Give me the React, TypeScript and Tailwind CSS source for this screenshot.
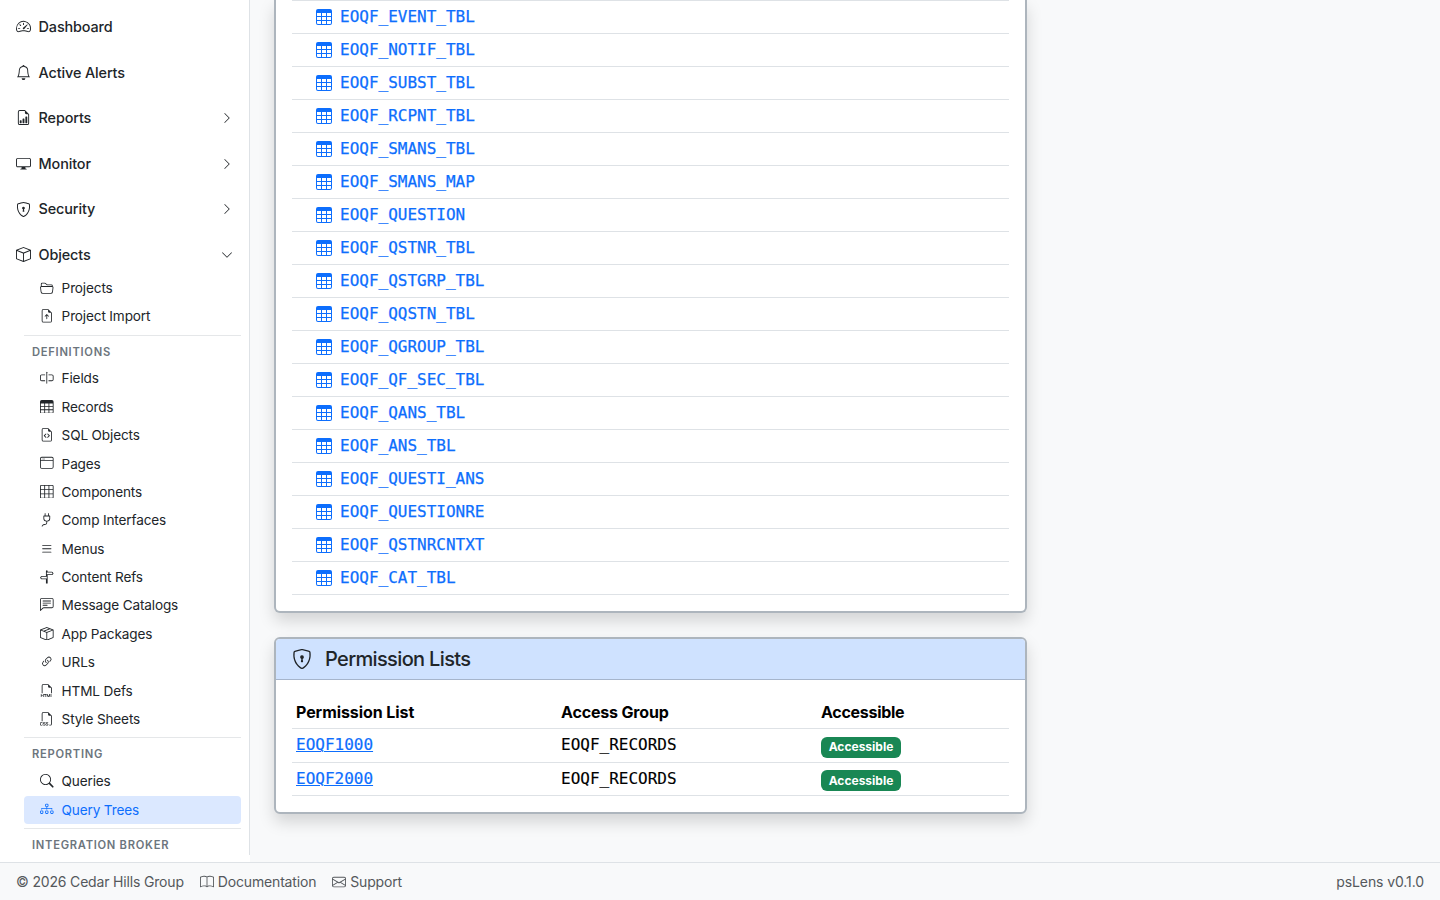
import type { IconType } from "react-icons";
import {
  BsSpeedometer2, BsBell, BsFileEarmarkBarGraph, BsDisplay, BsShieldLock, BsBox, BsChevronRight, BsChevronDown,
  BsFolder2Open, BsFileEarmarkArrowUp, BsInputCursor, BsTable, BsFileEarmarkCode, BsWindow, BsGrid3X3, BsPlug,
  BsList, BsSignpostSplit, BsChatLeftText, BsBoxSeam, BsLink45Deg, BsFiletypeHtml, BsFiletypeCss, BsSearch,
  BsDiagram3, BsBook, BsEnvelope,
} from "react-icons/bs";

type Item = { icon: IconType; label: string; active?: boolean };

const mainItems: (Item & { chevron?: IconType })[] = [
  { icon: BsSpeedometer2, label: "Dashboard" },
  { icon: BsBell, label: "Active Alerts" },
  { icon: BsFileEarmarkBarGraph, label: "Reports", chevron: BsChevronRight },
  { icon: BsDisplay, label: "Monitor", chevron: BsChevronRight },
  { icon: BsShieldLock, label: "Security", chevron: BsChevronRight },
  { icon: BsBox, label: "Objects", chevron: BsChevronDown },
];

const projects: Item[] = [
  { icon: BsFolder2Open, label: "Projects" },
  { icon: BsFileEarmarkArrowUp, label: "Project Import" },
];

const definitions: Item[] = [
  { icon: BsInputCursor, label: "Fields" },
  { icon: BsTable, label: "Records" },
  { icon: BsFileEarmarkCode, label: "SQL Objects" },
  { icon: BsWindow, label: "Pages" },
  { icon: BsGrid3X3, label: "Components" },
  { icon: BsPlug, label: "Comp Interfaces" },
  { icon: BsList, label: "Menus" },
  { icon: BsSignpostSplit, label: "Content Refs" },
  { icon: BsChatLeftText, label: "Message Catalogs" },
  { icon: BsBoxSeam, label: "App Packages" },
  { icon: BsLink45Deg, label: "URLs" },
  { icon: BsFiletypeHtml, label: "HTML Defs" },
  { icon: BsFiletypeCss, label: "Style Sheets" },
];

const reporting: Item[] = [
  { icon: BsSearch, label: "Queries" },
  { icon: BsDiagram3, label: "Query Trees", active: true },
];

const records = [
  "EOQF_EVENT_TBL", "EOQF_NOTIF_TBL", "EOQF_SUBST_TBL", "EOQF_RCPNT_TBL", "EOQF_SMANS_TBL", "EOQF_SMANS_MAP",
  "EOQF_QUESTION", "EOQF_QSTNR_TBL", "EOQF_QSTGRP_TBL", "EOQF_QQSTN_TBL", "EOQF_QGROUP_TBL", "EOQF_QF_SEC_TBL",
  "EOQF_QANS_TBL", "EOQF_ANS_TBL", "EOQF_QUESTI_ANS", "EOQF_QUESTIONRE", "EOQF_QSTNRCNTXT", "EOQF_CAT_TBL",
];

function SubItems({ items }: { items: Item[] }) {
  return (
    <ul>
      {items.map(({ icon: Icon, label, active }) => (
        <li
          key={label}
          className={
            active
              ? "flex h-[28.4px] items-center gap-2 rounded bg-[#dbe8ff] pl-4 text-[#0d6efd]"
              : "flex h-[28.4px] items-center gap-2 pl-4"
          }
        >
          <Icon className="mb-px size-[13.6px] shrink-0" />
          <span className="tracking-[-0.15px]">{label}</span>
        </li>
      ))}
    </ul>
  );
}

function SectionLabel({ children }: { children: string }) {
  return (
    <>
      <hr className="my-1 border-[#e5e7e9]" />
      <h6 className="px-2 py-1 text-[11.2px] leading-[16.8px] font-semibold tracking-[0.72px] text-[#6c757d]">{children}</h6>
    </>
  );
}

function Sidebar() {
  return (
    <aside className="w-[250px] shrink-0 bg-white">
      <nav className="h-[855px] overflow-hidden border-r border-[#dee2e6] pt-2">
        <ul className="flex flex-col gap-2 text-[14.4px] font-medium">
          {mainItems.map(({ icon: Icon, label, chevron: Chevron }) => (
            <li key={label} className="flex h-[37.6px] items-center pr-4 pl-4">
              <Icon className="size-[15px] shrink-0" />
              <span className="ml-[7.6px] grow tracking-[-0.12px]">{label}</span>
              {Chevron && <Chevron className="size-3 shrink-0" />}
            </li>
          ))}
        </ul>
        <div className="mr-2 ml-6 pt-[0.2px] text-[13.6px]">
          <SubItems items={projects} />
          <SectionLabel>DEFINITIONS</SectionLabel>
          <SubItems items={definitions} />
          <SectionLabel>REPORTING</SectionLabel>
          <SubItems items={reporting} />
          <SectionLabel>INTEGRATION BROKER</SectionLabel>
        </div>
      </nav>
    </aside>
  );
}

function PermissionRow({ name, className }: { name: string; className: string }) {
  return (
    <tr className={className}>
      <td className="pl-1 font-['DejaVu_Sans_Mono',monospace] text-[#0d6efd] [-webkit-text-stroke:0.2px]">
        <a className="underline decoration-1">{name}</a>
      </td>
      <td className="pl-1 font-['DejaVu_Sans_Mono',monospace] [-webkit-text-stroke:0.15px]">EOQF_RECORDS</td>
      <td className="pl-1">
        <span className="mt-1 flex h-[21px] w-20 items-center justify-center rounded-md bg-[#198754] text-xs font-bold text-white">
          Accessible
        </span>
      </td>
    </tr>
  );
}

export default function App() {
  return (
    <div className="flex h-[900px] w-full flex-col overflow-hidden bg-[#f8f9fa] font-[Inter,sans-serif] text-[#212529]">
      <div className="flex h-[862px] overflow-hidden">
        <Sidebar />
        <main className="flex w-[777px] flex-col gap-6 pl-6">
          <section className="h-[613px] shrink-0 rounded-b-md border-2 border-t-0 border-[#adb5bd] bg-white px-4 shadow-[0_8px_16px_rgba(0,0,0,0.15)]">
            <ul className="border-t border-[#dee2e6]">
              {records.map((name) => (
                <li key={name} className="flex h-[33px] items-center gap-2 border-b border-[#dee2e6] pl-6 text-[#0d6efd]">
                  <BsTable className="size-4 shrink-0" />
                  <span className="font-['DejaVu_Sans_Mono',monospace] [-webkit-text-stroke:0.25px]">{name}</span>
                </li>
              ))}
            </ul>
          </section>
          <section className="h-[177px] shrink-0 overflow-hidden rounded-md border-2 border-[#adb5bd] bg-white shadow-[0_8px_16px_rgba(0,0,0,0.15)]">
            <header className="flex h-[41px] items-center border-b border-[#a6b5cc] bg-[#cfe2ff] px-4">
              <BsShieldLock className="size-5" />
              <h5 className="ml-[13px] text-xl font-medium tracking-[-0.65px]">Permission Lists</h5>
            </header>
            <div className="px-4 pt-4 text-black">
              <table className="w-full table-fixed border-collapse text-left">
                <colgroup>
                  <col className="w-[265px]" />
                  <col className="w-[260px]" />
                  <col />
                </colgroup>
                <thead>
                  <tr className="h-8 border-b border-[#dee2e6]">
                    <th className="pt-px pl-1 font-bold tracking-[-0.08px]">Permission List</th>
                    <th className="pt-px pl-1 font-bold tracking-[-0.17px]">Access Group</th>
                    <th className="pt-px pl-1 font-bold tracking-[-0.28px]">Accessible</th>
                  </tr>
                </thead>
                <tbody>
                  <PermissionRow name="EOQF1000" className="h-[34px] border-b border-[#dee2e6]" />
                  <PermissionRow name="EOQF2000" className="h-[33px] border-b border-[#dee2e6]" />
                </tbody>
              </table>
            </div>
          </section>
        </main>
      </div>
      <footer className="flex h-[38px] items-center border-t border-[#dee2e6] px-4 text-sm tracking-[-0.17px] text-[#54585c]">
        <span>© 2026 Cedar Hills Group</span>
        <a className="ml-4 flex items-center gap-1">
          <BsBook className="size-3.5" />
          Documentation
        </a>
        <a className="ml-4 flex items-center gap-1">
          <BsEnvelope className="size-3.5" />
          Support
        </a>
        <span className="ml-auto tracking-[-0.1px]">psLens v0.1.0</span>
      </footer>
    </div>
  );
}
